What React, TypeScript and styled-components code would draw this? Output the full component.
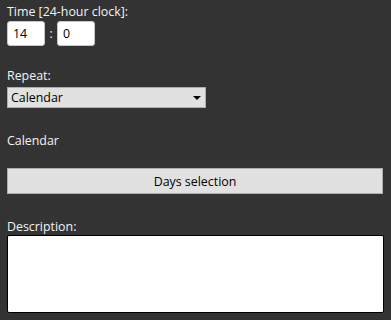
import React from 'react'
import styled, { createGlobalStyle } from 'styled-components'

const GlobalStyle = createGlobalStyle`
  html, body {
    margin: 0;
    padding: 0;
    background: #333333;
  }
  body {
    font-family: 'Open Sans', 'Noto Sans', 'Liberation Sans', sans-serif;
    font-size: 12px;
  }
`

const Panel = styled.div`
  width: 391px;
  height: 320px;
  box-sizing: border-box;
  padding: 4px 7px 0;
  display: flex;
  flex-direction: column;
  color: #f4f4f4;
`

const Label = styled.div<{ $top?: number; $bottom?: number }>`
  line-height: 16px;
  font-size: 12.4px;
  margin-top: ${(p) => p.$top ?? 0}px;
  margin-bottom: ${(p) => p.$bottom ?? 0}px;
`

const TimeRow = styled.div`
  display: flex;
  align-items: center;
  height: 25px;
`

const TimeInput = styled.input`
  width: 38px;
  height: 25px;
  box-sizing: border-box;
  border: 1px solid #c8c8c8;
  border-radius: 3px;
  background: #ffffff;
  color: #000;
  font: inherit;
  font-size: 12.4px;
  padding: 0 5px;
  outline: none;
`

const Colon = styled.span`
  width: 12px;
  text-align: center;
  color: #f4f4f4;
`

const SelectBox = styled.div`
  width: 199px;
  height: 21px;
  box-sizing: border-box;
  border: 1px solid #adadad;
  background: #e1e1e1;
  color: #000;
  font-size: 12.4px;
  display: flex;
  align-items: center;
  padding-left: 3px;
`

const Arrow = styled.span`
  margin-left: auto;
  margin-right: 4px;
  width: 0;
  height: 0;
  border-left: 4px solid transparent;
  border-right: 4px solid transparent;
  border-top: 4px solid #000;
`

const Button = styled.button`
  margin-top: 19px;
  width: 376px;
  height: 26px;
  box-sizing: border-box;
  border: 1px solid #adadad;
  background: #e1e1e1;
  color: #000;
  font: inherit;
  font-size: 12.4px;
  padding: 0;
`

const TextArea = styled.textarea`
  width: 377px;
  height: 78px;
  box-sizing: border-box;
  border: 1px solid #000;
  border-radius: 2px;
  background: #fff;
  resize: none;
  font: inherit;
  outline: none;
`

export default function App() {
  return (
    <>
      <GlobalStyle />
      <Panel>
        <Label $bottom={1}>Time [24-hour clock]:</Label>
        <TimeRow>
          <TimeInput defaultValue="14" />
          <Colon>:</Colon>
          <TimeInput defaultValue="0" />
        </TimeRow>
        <Label $top={22} $bottom={3}>Repeat:</Label>
        <SelectBox>
          Calendar
          <Arrow />
        </SelectBox>
        <Label $top={25}>Calendar</Label>
        <Button>Days selection</Button>
        <Label $top={25}>Description:</Label>
        <TextArea />
      </Panel>
    </>
  )
}
